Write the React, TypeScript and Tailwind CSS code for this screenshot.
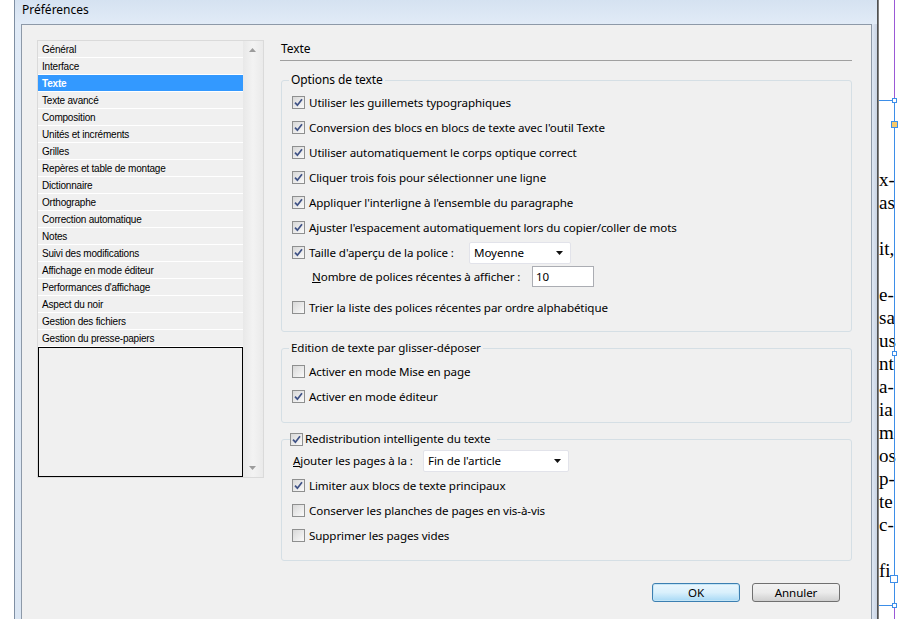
import React from "react";

const sections = [
  "Général",
  "Interface",
  "Texte",
  "Texte avancé",
  "Composition",
  "Unités et incréments",
  "Grilles",
  "Repères et table de montage",
  "Dictionnaire",
  "Orthographe",
  "Correction automatique",
  "Notes",
  "Suivi des modifications",
  "Affichage en mode éditeur",
  "Performances d'affichage",
  "Aspect du noir",
  "Gestion des fichiers",
  "Gestion du presse-papiers",
];

const docLines = ["x-", "as", "", "it,", "", "e-", "sa", "us", "nt", "a-", "ia", "m", "os", "p-", "te", "c-", "", "fi"];

const CheckBox = ({ checked }: { checked?: boolean }) => (
  <span className="w-[13px] h-[13px] shrink-0 border border-[#8e8f8f] bg-gradient-to-br from-[#d8d8d8] to-[#fafafa] flex items-center justify-center">
    {checked && (
      <svg width="9" height="9" viewBox="0 0 9 9">
        <path d="M1 4.6 L3.4 7.2 L8 1.2" stroke="#3f5286" strokeWidth="1.7" fill="none" />
      </svg>
    )}
  </span>
);

const Option = ({ label, checked }: { label: string; checked?: boolean }) => (
  <div className="h-[25px] flex items-center gap-[4px]">
    <CheckBox checked={checked} />
    <span>{label}</span>
  </div>
);

const Arrow = () => (
  <svg width="8" height="4" viewBox="0 0 8 4" className="shrink-0">
    <path d="M0 0 H7 L3.5 4 Z" fill="#111" />
  </svg>
);

const Combo = ({ value, className }: { value: string; className: string }) => (
  <div className={`${className} bg-white border border-[#e2e3ea] rounded-[2px] flex items-center justify-between pl-[4px] pr-[6px]`}>
    <span>{value}</span>
    <Arrow />
  </div>
);

export default function App() {
  return (
    <div className="w-[922px] h-[619px] flex overflow-hidden bg-white text-[11.6px] tracking-[-0.1px] text-black font-['Noto_Sans','Segoe_UI',sans-serif]">
      <div className="w-[14px] shrink-0 bg-white" />

      {/* window */}
      <div className="w-[863px] shrink-0 flex flex-col border-l border-[#7f8fa3]">
        <div className="h-[24px] shrink-0 flex items-center pl-[7px] pb-[4px] text-[12px] tracking-normal bg-gradient-to-b from-[#d5e2f1] to-[#e1ebf7]">
          Préférences
        </div>
        <div className="flex-1 flex">
          <div className="w-[6px] bg-gradient-to-b from-[#e1ebf7] to-[#dbe6f3]" />
          <div className="flex-1 flex flex-col border-l border-t border-r border-[#8d99a8] bg-[#f0f0f0] pl-[15px] pt-[15px]">
            <div className="flex">
              {/* section list */}
              <div className="w-[227px] h-[438px] shrink-0 border border-[#dadada] flex font-['Liberation_Sans',sans-serif] text-[10px] tracking-[-0.2px]">
                <div className="w-[205px] flex flex-col">
                  {sections.map((s) => (
                    <div
                      key={s}
                      className={`h-[17px] shrink-0 border-b border-white flex items-center pl-[4px] ${
                        s === "Texte" ? "bg-[#3399ff] text-white font-bold" : ""
                      }`}
                    >
                      {s}
                    </div>
                  ))}
                  <div className="flex-1 border border-black" />
                </div>
                <div className="flex-1 flex flex-col items-center justify-between py-[7px] bg-gradient-to-r from-[#e8e8e8] via-[#f3f3f3] to-[#eaeaea]">
                  <svg width="8" height="4" viewBox="0 0 8 4">
                    <path d="M0 4 H7 L3.5 0 Z" fill="#9c9c9c" />
                  </svg>
                  <svg width="8" height="4" viewBox="0 0 8 4">
                    <path d="M0 0 H7 L3.5 4 Z" fill="#9c9c9c" />
                  </svg>
                </div>
              </div>

              {/* settings */}
              <div className="w-[572px] ml-[16px] flex flex-col">
                <div className="h-[21px] border-b border-[#a0a0a0] pl-[1px] pt-[1px] leading-[16px] text-[12px]">Texte</div>

                <fieldset className="ml-[1px] mt-[11px] border border-[#d5dfe5] rounded-[3px] pl-[10px] pb-[11px]">
                  <legend className="ml-[-3px] px-[2px] leading-[16px] text-[12px]">Options de texte</legend>
                  <div className="pt-[2px]">
                    <Option checked label="Utiliser les guillemets typographiques" />
                    <Option checked label="Conversion des blocs en blocs de texte avec l'outil Texte" />
                    <Option checked label="Utiliser automatiquement le corps optique correct" />
                    <Option checked label="Cliquer trois fois pour sélectionner une ligne" />
                    <Option checked label="Appliquer l'interligne à l'ensemble du paragraphe" />
                    <Option checked label="Ajuster l'espacement automatiquement lors du copier/coller de mots" />
                    <div className="h-[25px] flex items-center gap-[4px]">
                      <CheckBox checked />
                      <span className="w-[156px]">Taille d'aperçu de la police :</span>
                      <Combo value="Moyenne" className="w-[102px] h-[22px]" />
                    </div>
                    <div className="h-[23px] flex items-center pl-[20px]">
                      <span className="w-[220px]">
                        <span className="underline">N</span>ombre de polices récentes à afficher :
                      </span>
                      <div className="w-[62px] h-[21px] bg-white border border-[#abadb3] flex items-center pl-[3px]">10</div>
                    </div>
                    <div className="h-[7px]" />
                    <Option label="Trier la liste des polices récentes par ordre alphabétique" />
                  </div>
                </fieldset>

                <fieldset className="ml-[1px] mt-[8px] border border-[#d5dfe5] rounded-[3px] pl-[10px] pb-[13px]">
                  <legend className="ml-[-3px] px-[2px] leading-[16px]">Edition de texte par glisser-déposer</legend>
                  <div className="pt-[3px]">
                    <Option label="Activer en mode Mise en page" />
                    <Option checked label="Activer en mode éditeur" />
                  </div>
                </fieldset>

                <fieldset className="ml-[1px] mt-[8px] border border-[#d5dfe5] rounded-[3px] pl-[10px] pb-[12px]">
                  <legend className="ml-[-2px] pr-[6px] leading-[16px] flex items-center gap-[2px]">
                    <CheckBox checked />
                    <span>Redistribution intelligente du texte</span>
                  </legend>
                  <div className="pt-[1px]">
                    <div className="h-[25px] flex items-center pl-[1px]">
                      <span className="w-[130px]">
                        <span className="underline">A</span>jouter les pages à la :
                      </span>
                      <Combo value="Fin de l'article" className="w-[146px] h-[22px]" />
                    </div>
                    <Option checked label="Limiter aux blocs de texte principaux" />
                    <Option label="Conserver les planches de pages en vis-à-vis" />
                    <Option label="Supprimer les pages vides" />
                  </div>
                </fieldset>

                <div className="mt-[22px] flex justify-end gap-[12px] pr-[12px]">
                  <button className="w-[88px] h-[19px] rounded-[3px] border border-[#3c7fb1] bg-gradient-to-b from-[#eaf6fd] via-[#d9f0fc] to-[#a7d9f5] shadow-[inset_0_0_0_1px_#c4e5f6] flex items-center justify-center leading-none">
                    OK
                  </button>
                  <button className="w-[88px] h-[19px] rounded-[3px] border border-[#707070] bg-gradient-to-b from-[#f2f2f2] via-[#ebebeb] to-[#cfcfcf] flex items-center justify-center leading-none">
                    Annuler
                  </button>
                </div>
              </div>
            </div>
          </div>
          <div className="w-[5px] bg-gradient-to-r from-[#dfe8f4] to-[#c9d3e3]" />
        </div>
      </div>

      {/* document behind the dialog */}
      <div className="w-[2px] shrink-0 bg-gradient-to-r from-[#3a3a3a] to-[#9a9a9a]" />
      <div className="relative flex-1 bg-white overflow-hidden">
        <div className="flex flex-col pt-[168px] font-['Liberation_Serif',serif] text-[19px] leading-[23px] tracking-normal">
          {docLines.map((t, i) => (
            <div key={i} className="h-[23px]">
              {t}
            </div>
          ))}
        </div>
        <div className="absolute left-[15px] top-0 w-px h-[100px] bg-[#9b59d6]" />
        <div className="absolute left-[15px] top-[100px] w-px h-[506px] bg-[#3d8ee8]" />
        <div className="absolute left-[15px] top-[606px] w-px h-[13px] bg-[#9b59d6]" />
        <div className="absolute left-0 top-[100px] w-[15px] h-px bg-[#3d8ee8]" />
        <div className="absolute left-0 top-[605px] w-[15px] h-px bg-[#3d8ee8]" />
        <div className="absolute left-[13px] top-[98px] w-[5px] h-[5px] bg-white border border-[#3d8ee8]" />
        <div className="absolute left-[12px] top-[121px] w-[7px] h-[7px] bg-[#f7c96a] border border-[#3d8ee8]" />
        <div className="absolute left-[13px] top-[351px] w-[5px] h-[5px] bg-white border border-[#3d8ee8]" />
        <div className="absolute left-[11px] top-[575px] w-[8px] h-[8px] bg-white border border-[#3d8ee8]" />
        <div className="absolute left-[13px] top-[603px] w-[5px] h-[5px] bg-white border border-[#3d8ee8]" />
      </div>
    </div>
  );
}
